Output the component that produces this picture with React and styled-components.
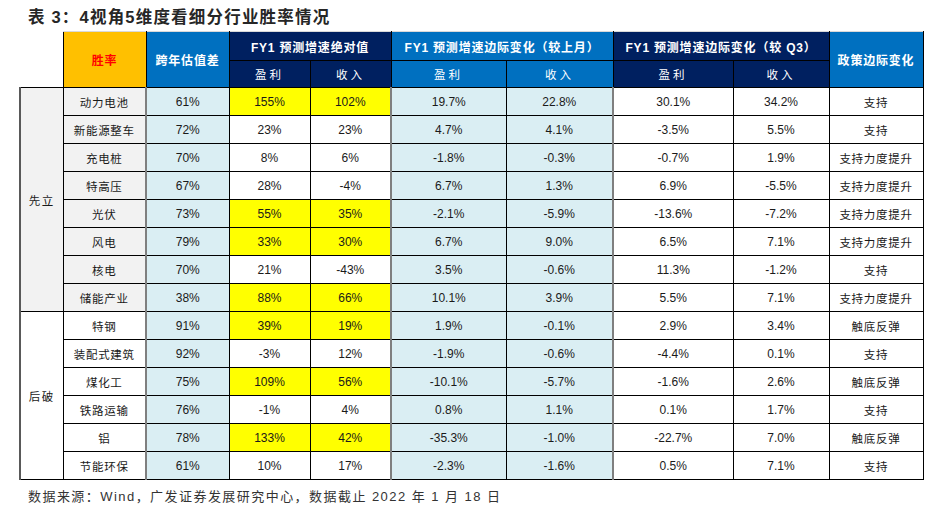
import React from 'react';
import styled, { createGlobalStyle } from 'styled-components';

const GlobalStyle = createGlobalStyle`
  body {
    margin: 0;
    background: #ffffff;
    font-family: "Liberation Sans", "Noto Sans CJK SC", sans-serif;
  }
`;

const Page = styled.div`
  width: 939px;
  height: 511px;
  box-sizing: border-box;
  padding: 7px 0 0 19px;
  display: flex;
  flex-direction: column;
`;

const Title = styled.h1`
  margin: 0 0 3px 9px;
  height: 21px;
  font-size: 16.5px;
  line-height: 21px;
  font-weight: bold;
  letter-spacing: 1.2px;
  color: #262626;
`;

const Table = styled.table`
  border-collapse: collapse;
  table-layout: fixed;
  width: 903px;
`;

const HeadCell = styled.th`
  height: ${p => (p.sub ? '26px' : '28px')};
  padding: 0;
  background: ${p => p.bg};
  color: ${p => (p.red ? '#ff0000' : '#ffffff')};
  font-size: ${p => (p.sub ? '11.5px' : '12px')};
  font-weight: ${p => (p.sub ? 'normal' : 'bold')};
  letter-spacing: ${p => (p.sub ? '3px' : '0.8px')};
  text-align: center;
  vertical-align: middle;
  border: 1px solid #000000;
  border-top-color: #d9d9d9;
  white-space: nowrap;
`;

const BlankHead = styled.th`
  border: none;
  background: #ffffff;
`;

const Row = styled.tr`
  height: 28px;
`;

const Cell = styled.td`
  padding: 0;
  background: ${p => p.bg || '#ffffff'};
  color: #1a1a1a;
  font-size: ${p => (p.cjk ? '11.5px' : '12px')};
  letter-spacing: ${p => (p.cjk ? '0.7px' : '0')};
  text-align: center;
  vertical-align: middle;
  border: 1px solid #000000;
  border-left: ${p => (p.grayLeft ? '2px solid #7f7f7f' : '1px solid #000000')};
  white-space: nowrap;
`;

const GroupCell = styled(Cell)`
  letter-spacing: 1.5px;
  border-left: 2px solid #595959;
`;

const Source = styled.p`
  margin: 6px 0 0 9px;
  font-size: 13px;
  letter-spacing: 1.45px;
  color: #333333;
`;

const ORANGE = '#ffc000';
const BLUE = '#0070c0';
const NAVY = '#002060';
const LIGHT = '#daeef3';
const GRAY = '#f2f2f2';
const YELLOW = '#ffff00';

const groups = [
  {
    name: '先立',
    shade: true,
    rows: [
      ['动力电池', '61%', '155%', '102%', '19.7%', '22.8%', '30.1%', '34.2%', '支持', true],
      ['新能源整车', '72%', '23%', '23%', '4.7%', '4.1%', '-3.5%', '5.5%', '支持'],
      ['充电桩', '70%', '8%', '6%', '-1.8%', '-0.3%', '-0.7%', '1.9%', '支持力度提升'],
      ['特高压', '67%', '28%', '-4%', '6.7%', '1.3%', '6.9%', '-5.5%', '支持力度提升'],
      ['光伏', '73%', '55%', '35%', '-2.1%', '-5.9%', '-13.6%', '-7.2%', '支持力度提升', true],
      ['风电', '79%', '33%', '30%', '6.7%', '9.0%', '6.5%', '7.1%', '支持力度提升', true],
      ['核电', '70%', '21%', '-43%', '3.5%', '-0.6%', '11.3%', '-1.2%', '支持'],
      ['储能产业', '38%', '88%', '66%', '10.1%', '3.9%', '5.5%', '7.1%', '支持力度提升', true],
    ],
  },
  {
    name: '后破',
    shade: false,
    rows: [
      ['特钢', '91%', '39%', '19%', '1.9%', '-0.1%', '2.9%', '3.4%', '触底反弹', true],
      ['装配式建筑', '92%', '-3%', '12%', '-1.9%', '-0.6%', '-4.4%', '0.1%', '支持'],
      ['煤化工', '75%', '109%', '56%', '-10.1%', '-5.7%', '-1.6%', '2.6%', '触底反弹', true],
      ['铁路运输', '76%', '-1%', '4%', '0.8%', '1.1%', '0.1%', '1.7%', '支持'],
      ['铝', '78%', '133%', '42%', '-35.3%', '-1.0%', '-22.7%', '7.0%', '触底反弹', true],
      ['节能环保', '61%', '10%', '17%', '-2.3%', '-1.6%', '0.5%', '7.1%', '支持'],
    ],
  },
];

const widths = [43, 83, 83, 81, 81, 115, 107, 120, 96, 94];

export default function App() {
  return (
    <Page>
      <GlobalStyle />
      <Title>表 3：4视角5维度看细分行业胜率情况</Title>
      <Table>
        <colgroup>
          {widths.map((w, i) => (
            <col key={i} style={{ width: w }} />
          ))}
        </colgroup>
        <thead>
          <tr>
            <BlankHead rowSpan={2} />
            <HeadCell rowSpan={2} bg={ORANGE} red>胜率</HeadCell>
            <HeadCell rowSpan={2} bg={BLUE}>跨年估值差</HeadCell>
            <HeadCell colSpan={2} bg={NAVY}>FY1 预测增速绝对值</HeadCell>
            <HeadCell colSpan={2} bg={BLUE}>FY1 预测增速边际变化（较上月）</HeadCell>
            <HeadCell colSpan={2} bg={NAVY}>FY1 预测增速边际变化（较 Q3）</HeadCell>
            <HeadCell rowSpan={2} bg={BLUE}>政策边际变化</HeadCell>
          </tr>
          <tr>
            <HeadCell sub bg={NAVY}>盈利</HeadCell>
            <HeadCell sub bg={NAVY}>收入</HeadCell>
            <HeadCell sub bg={BLUE}>盈利</HeadCell>
            <HeadCell sub bg={BLUE}>收入</HeadCell>
            <HeadCell sub bg={NAVY}>盈利</HeadCell>
            <HeadCell sub bg={NAVY}>收入</HeadCell>
          </tr>
        </thead>
        <tbody>
          {groups.map(group =>
            group.rows.map((r, i) => {
              const side = group.shade ? GRAY : '#ffffff';
              const hot = r[9] ? YELLOW : '#ffffff';
              return (
                <Row key={group.name + r[0]}>
                  {i === 0 && (
                    <GroupCell rowSpan={group.rows.length} bg={side} cjk>
                      {group.name}
                    </GroupCell>
                  )}
                  <Cell bg={side} cjk>{r[0]}</Cell>
                  <Cell bg={LIGHT} grayLeft>{r[1]}</Cell>
                  <Cell bg={hot}>{r[2]}</Cell>
                  <Cell bg={hot}>{r[3]}</Cell>
                  <Cell bg={LIGHT} grayLeft>{r[4]}</Cell>
                  <Cell bg={LIGHT}>{r[5]}</Cell>
                  <Cell grayLeft>{r[6]}</Cell>
                  <Cell>{r[7]}</Cell>
                  <Cell cjk>{r[8]}</Cell>
                </Row>
              );
            })
          )}
        </tbody>
      </Table>
      <Source>数据来源：Wind，广发证券发展研究中心，数据截止 2022 年 1 月 18 日</Source>
    </Page>
  );
}
